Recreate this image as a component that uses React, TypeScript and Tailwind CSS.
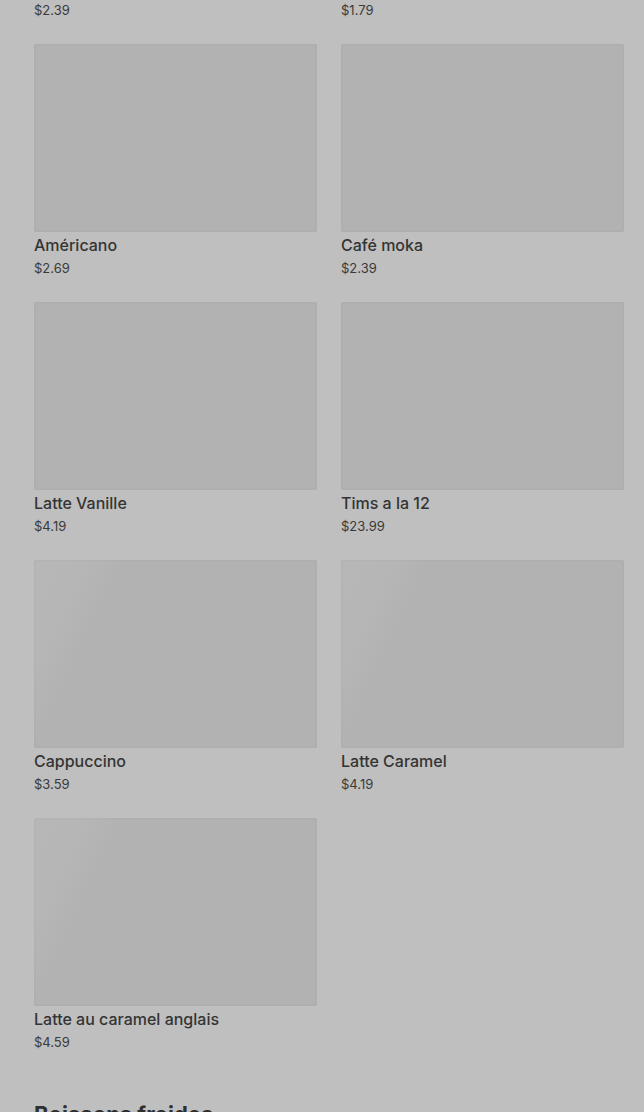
import React from "react";

type Item = { name?: string; price: string; shimmer?: boolean };

const items: Item[] = [
  { price: "$2.39" },
  { price: "$1.79" },
  { name: "Américano", price: "$2.69" },
  { name: "Café moka", price: "$2.39" },
  { name: "Latte Vanille", price: "$4.19" },
  { name: "Tims a la 12", price: "$23.99" },
  { name: "Cappuccino", price: "$3.59", shimmer: true },
  { name: "Latte Caramel", price: "$4.19", shimmer: true },
  { name: "Latte au caramel anglais", price: "$4.59", shimmer: true },
];

const ProductCard: React.FC<{ item: Item }> = ({ item }) => {
  // first row is scrolled off the top, only its price still shows
  if (!item.name) {
    return <p className="text-[13px] leading-5 text-[#3a3a3a]">{item.price}</p>;
  }
  return (
    <div className="flex flex-col">
      <div
        className={
          "h-[188px] w-full rounded-[2px] shadow-[inset_0_0_3px_rgba(0,0,0,0.06)] " +
          (item.shimmer
            ? "bg-[linear-gradient(115deg,#b7b7b7_0%,#b6b6b6_14%,#b2b2b2_24%,#b2b2b2_100%)]"
            : "bg-[#b2b2b2]")
        }
      />
      <h3 className="mt-px text-base leading-6 font-medium text-[#343434]">{item.name}</h3>
      <p className="mt-px text-[13px] leading-5 text-[#3a3a3a]">{item.price}</p>
    </div>
  );
};

const App: React.FC = () => {
  return (
    <div className="h-[1112px] overflow-hidden bg-[#bfbfbf] font-['Inter',sans-serif]">
      <main className="pl-[34px] pr-5">
        <div className="grid grid-cols-2 gap-x-6 gap-y-6">
          {items.map((item, i) => (
            <ProductCard key={i} item={item} />
          ))}
        </div>
        <h2 className="mt-[46px] text-[22px] leading-8 font-bold text-[#2f2f2f]">Boissons froides</h2>
      </main>
    </div>
  );
};

export default App;
